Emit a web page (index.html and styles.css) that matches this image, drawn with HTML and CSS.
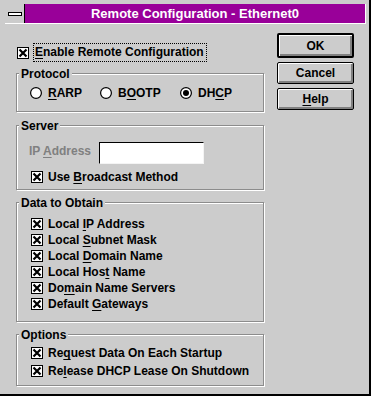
FILE: index.html
```html
<!DOCTYPE html>
<html>
<head>
<meta charset="utf-8">
<title>Remote Configuration - Ethernet0</title>
<link rel="stylesheet" href="styles.css">
</head>
<body>
<div class="window">
  <div class="titlebar">
    <div class="sysmenu"><span class="sysdash"></span></div>
    <div class="caption">Remote Configuration - Ethernet0</div>
  </div>
  <div class="content">
    <div class="left">
      <div class="enable-row">
        <svg class="cb" width="12" height="12" viewBox="0 0 12 12"><rect x="0.5" y="0.5" width="11" height="11" fill="#fff" stroke="#000"/><path d="M2.5 2.5L9.5 9.5M9.5 2.5L2.5 9.5" stroke="#000" stroke-width="2.2"/></svg>
        <span class="focus"><u>E</u>nable Remote Configuration</span>
      </div>

      <div class="group protocol">
        <span class="legend">Protocol</span>
        <div class="radio-row">
          <div class="radio-item w1"><svg class="rb" width="12" height="12" viewBox="0 0 12 12"><circle cx="6" cy="6" r="5.4" fill="#fff" stroke="#000" stroke-width="1.2"/></svg><span><u>R</u>ARP</span></div>
          <div class="radio-item w2"><svg class="rb" width="12" height="12" viewBox="0 0 12 12"><circle cx="6" cy="6" r="5.4" fill="#fff" stroke="#000" stroke-width="1.2"/></svg><span>B<u>O</u>OTP</span></div>
          <div class="radio-item"><svg class="rb" width="12" height="12" viewBox="0 0 12 12"><circle cx="6" cy="6" r="5.4" fill="#fff" stroke="#000" stroke-width="1.2"/><circle cx="6" cy="6" r="3" fill="#000"/></svg><span>DH<u>C</u>P</span></div>
        </div>
      </div>

      <div class="group server">
        <span class="legend">Server</span>
        <div class="ip-row">
          <span class="ip-label">IP <u>A</u>ddress</span>
          <div class="ip-input"></div>
        </div>
        <div class="cb-row broadcast">
          <svg class="cb" width="12" height="12" viewBox="0 0 12 12"><rect x="0.5" y="0.5" width="11" height="11" fill="#fff" stroke="#000"/><path d="M2.5 2.5L9.5 9.5M9.5 2.5L2.5 9.5" stroke="#000" stroke-width="2.2"/></svg>
          <span>Use <u>B</u>roadcast Method</span>
        </div>
      </div>

      <div class="group data">
        <span class="legend">Data to Obtain</span>
        <div class="cb-row"><svg class="cb" width="12" height="12" viewBox="0 0 12 12"><rect x="0.5" y="0.5" width="11" height="11" fill="#fff" stroke="#000"/><path d="M2.5 2.5L9.5 9.5M9.5 2.5L2.5 9.5" stroke="#000" stroke-width="2.2"/></svg><span>Local <u>I</u>P Address</span></div>
        <div class="cb-row"><svg class="cb" width="12" height="12" viewBox="0 0 12 12"><rect x="0.5" y="0.5" width="11" height="11" fill="#fff" stroke="#000"/><path d="M2.5 2.5L9.5 9.5M9.5 2.5L2.5 9.5" stroke="#000" stroke-width="2.2"/></svg><span>Local <u>S</u>ubnet Mask</span></div>
        <div class="cb-row"><svg class="cb" width="12" height="12" viewBox="0 0 12 12"><rect x="0.5" y="0.5" width="11" height="11" fill="#fff" stroke="#000"/><path d="M2.5 2.5L9.5 9.5M9.5 2.5L2.5 9.5" stroke="#000" stroke-width="2.2"/></svg><span>Local <u>D</u>omain Name</span></div>
        <div class="cb-row"><svg class="cb" width="12" height="12" viewBox="0 0 12 12"><rect x="0.5" y="0.5" width="11" height="11" fill="#fff" stroke="#000"/><path d="M2.5 2.5L9.5 9.5M9.5 2.5L2.5 9.5" stroke="#000" stroke-width="2.2"/></svg><span>Local Hos<u>t</u> Name</span></div>
        <div class="cb-row"><svg class="cb" width="12" height="12" viewBox="0 0 12 12"><rect x="0.5" y="0.5" width="11" height="11" fill="#fff" stroke="#000"/><path d="M2.5 2.5L9.5 9.5M9.5 2.5L2.5 9.5" stroke="#000" stroke-width="2.2"/></svg><span>Do<u>m</u>ain Name Servers</span></div>
        <div class="cb-row"><svg class="cb" width="12" height="12" viewBox="0 0 12 12"><rect x="0.5" y="0.5" width="11" height="11" fill="#fff" stroke="#000"/><path d="M2.5 2.5L9.5 9.5M9.5 2.5L2.5 9.5" stroke="#000" stroke-width="2.2"/></svg><span>Default <u>G</u>ateways</span></div>
      </div>

      <div class="group options">
        <span class="legend">Options</span>
        <div class="cb-row tall"><svg class="cb" width="12" height="12" viewBox="0 0 12 12"><rect x="0.5" y="0.5" width="11" height="11" fill="#fff" stroke="#000"/><path d="M2.5 2.5L9.5 9.5M9.5 2.5L2.5 9.5" stroke="#000" stroke-width="2.2"/></svg><span>Re<u>q</u>uest Data On Each Startup</span></div>
        <div class="cb-row tall"><svg class="cb" width="12" height="12" viewBox="0 0 12 12"><rect x="0.5" y="0.5" width="11" height="11" fill="#fff" stroke="#000"/><path d="M2.5 2.5L9.5 9.5M9.5 2.5L2.5 9.5" stroke="#000" stroke-width="2.2"/></svg><span>Re<u>l</u>ease DHCP Lease On Shutdown</span></div>
      </div>
    </div>

    <div class="right">
      <div class="btn default">OK</div>
      <div class="btn">Cancel</div>
      <div class="btn"><u>H</u>elp</div>
    </div>
  </div>
</div>
</body>
</html>
```

FILE: styles.css
```css
html, body {
  margin: 0;
  padding: 0;
  background: #cccccc;
}

body {
  font: bold 12px "Liberation Sans", Arial, sans-serif;
  color: #000;
}

.window {
  width: 371px;
  height: 396px;
  box-sizing: border-box;
  border-right: 2px solid #000;
  border-bottom: 2px solid #000;
  background: #cccccc;
  padding-top: 4px;
  overflow: hidden;
}

.titlebar {
  display: flex;
  margin-left: 5px;
  width: 361px;
  height: 20px;
  box-sizing: border-box;
  border-bottom: 1px solid #fff;
  border-right: 1px solid #fff;
}

.sysmenu {
  width: 19px;
  height: 19px;
  border-right: 1px solid #000;
  display: flex;
  align-items: center;
  justify-content: center;
  background: #cccccc;
}

.sysdash {
  display: block;
  width: 14px;
  height: 4px;
  box-sizing: border-box;
  border: 1px solid #000;
  background: #fff;
  margin-top: 1px;
}

.caption {
  flex: 1;
  height: 19px;
  box-sizing: border-box;
  padding-top: 1px;
  background: #990099;
  color: #fff;
  font-size: 13px;
  line-height: 18px;
  text-align: center;
  white-space: nowrap;
}

.content {
  display: flex;
  padding-left: 16px;
}

.left {
  width: 248px;
  margin-top: 19px;
}

.right {
  margin-left: 13px;
  margin-top: 9px;
  display: flex;
  flex-direction: column;
}

svg {
  display: block;
  flex: none;
}

u {
  text-decoration: underline;
  text-underline-offset: 2px;
}

.enable-row {
  display: flex;
  align-items: center;
  height: 19px;
  margin-bottom: 11px;
}

.enable-row .cb {
  margin-left: 1px;
}

.focus {
  margin-left: 4px;
  border: 1px dotted #000;
  padding: 0 2px 0 1px;
  line-height: 17px;
  white-space: nowrap;
}

.group {
  position: relative;
  box-sizing: border-box;
  border: 1px solid #8c8c8c;
  box-shadow: inset 1px 1px 0 #fff, 1px 1px 0 #fff;
  padding-left: 13px;
}

.legend {
  position: absolute;
  top: -7px;
  left: 2px;
  padding: 0 2px;
  background: #cccccc;
  line-height: 14px;
  white-space: nowrap;
}

.protocol {
  height: 39px;
  padding-top: 11px;
}

.server {
  height: 65px;
  margin-top: 13px;
  padding-top: 16px;
}

.data {
  height: 120px;
  margin-top: 12px;
  padding-top: 13px;
}

.options {
  height: 52px;
  margin-top: 12px;
  padding-top: 9px;
}

.radio-row {
  display: flex;
  height: 16px;
}

.radio-item {
  display: flex;
  align-items: center;
  gap: 6px;
  line-height: 16px;
  white-space: nowrap;
}

.radio-item.w1 { width: 70px; }
.radio-item.w2 { width: 80px; }

.ip-row {
  display: flex;
  height: 22px;
}

.ip-label {
  width: 70px;
  margin-left: -1px;
  margin-top: 1px;
  line-height: 16px;
  color: #808080;
  white-space: nowrap;
}

.ip-input {
  width: 105px;
  height: 22px;
  box-sizing: border-box;
  background: #fff;
  border-style: solid;
  border-width: 1px;
  border-color: #000 #f4f4f4 #f4f4f4 #000;
}

.cb-row {
  display: flex;
  align-items: center;
  gap: 5px;
  height: 16px;
  line-height: 16px;
  white-space: nowrap;
}

.cb-row .cb {
  margin-left: 1px;
}

.cb-row.tall {
  height: 18px;
}

.broadcast {
  margin-top: 5px;
}

.btn {
  width: 77px;
  height: 22px;
  box-sizing: border-box;
  border: 1px solid #000;
  border-radius: 2px;
  background: #cccccc;
  box-shadow: inset 1px 1px 0 #fff, inset -2px -2px 0 #808080;
  display: flex;
  align-items: center;
  justify-content: center;
  line-height: 16px;
  margin-top: 4px;
}

.btn.default {
  height: 25px;
  border-width: 2px;
  margin-top: 0;
}
```
